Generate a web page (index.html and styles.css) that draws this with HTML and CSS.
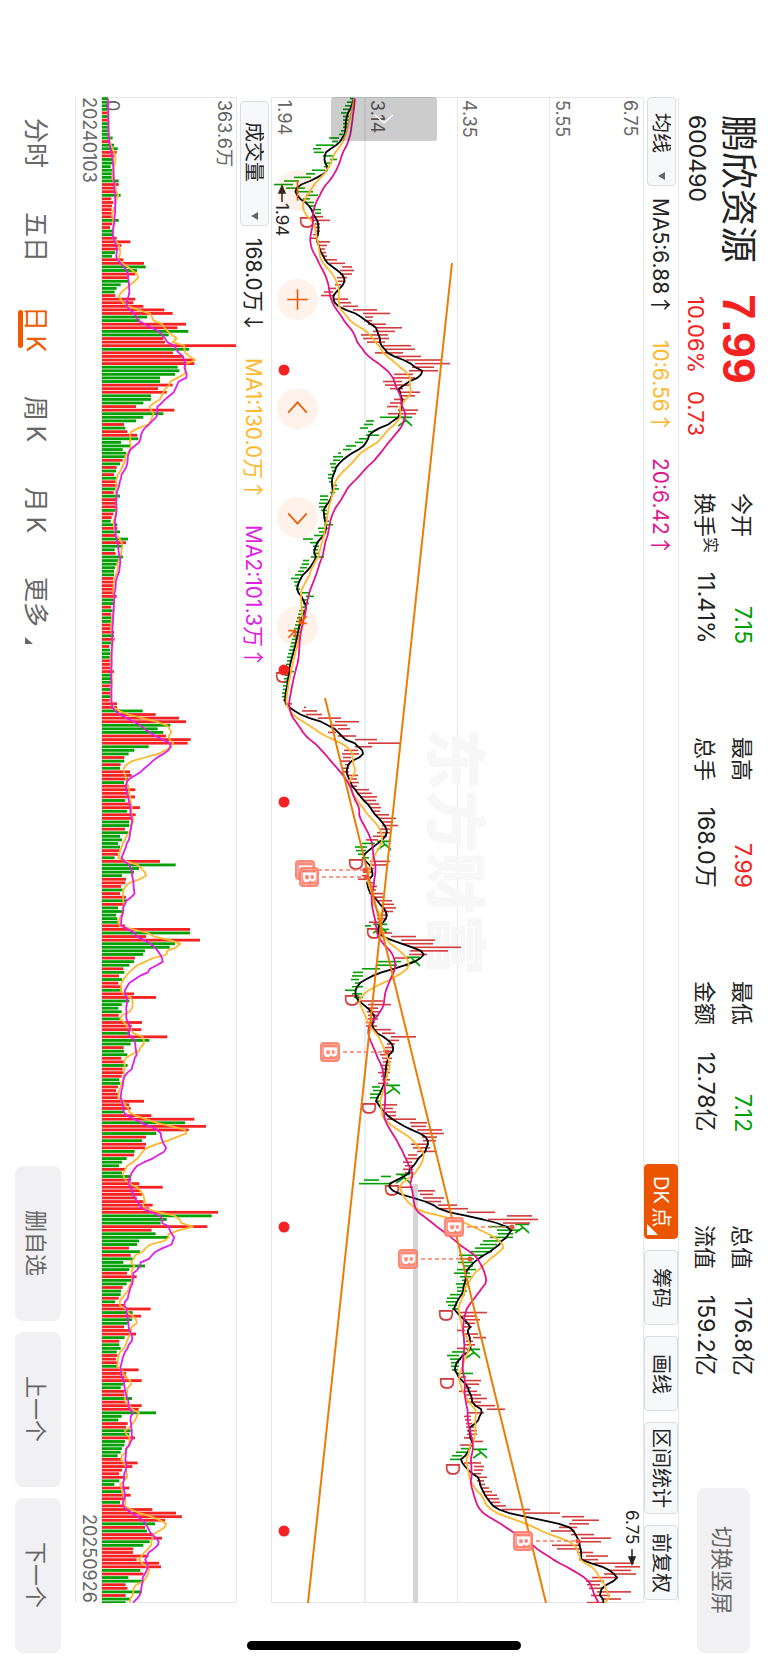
FILE: index.html
```html
<!DOCTYPE html>
<html lang="zh-CN">
<head>
    <meta charset="UTF-8">
    <meta name="viewport" content="width=device-width, initial-scale=1.0">
    <title>鹏欣资源 600490</title>
    <link rel="stylesheet" href="styles.css">
</head>
<body>
    <header class="header">
        <div class="brand">
            <h1>鹏欣资源</h1>
            <span class="price">7.99</span>
            <span class="code">600490</span>
            <span class="change"><span>10.06%</span><span>0.73</span></span>
        </div>
        <dl class="stats">
            <div><dt>今开</dt><dd class="down">7.15</dd></div>
            <div><dt>最高</dt><dd class="up">7.99</dd></div>
            <div><dt>最低</dt><dd class="down">7.12</dd></div>
            <div><dt>总值</dt><dd>176.8亿</dd></div>
            <div><dt>换手<small>实</small></dt><dd>11.41%</dd></div>
            <div><dt>总手</dt><dd>168.0万</dd></div>
            <div><dt>金额</dt><dd>12.78亿</dd></div>
            <div><dt>流值</dt><dd>159.2亿</dd></div>
        </dl>
        <button class="gray-btn rotate-btn">切换竖屏</button>
    </header>

    <main class="main">
        <div class="toolbar toolbar-main">
            <select class="picker" aria-label="主图指标"><option>均线</option></select>
            <span class="ma">MA5:6.88<i>↑</i></span>
            <span class="ma ma-yellow">10:6.56<i>↑</i></span>
            <span class="ma ma-pink">20:6.42<i>↑</i></span>
            <div class="tools">
                <button class="tool active">DK&thinsp;点</button>
                <button class="tool">筹码</button>
                <button class="tool">画线</button>
                <button class="tool wide">区间统计</button>
                <button class="tool">前复权</button>
            </div>
        </div>

        <div class="price-chart">
            <svg viewBox="271 97 373 1506" role="img" aria-label="日K线">
                <g class="grid">
                    <path d="M271.5 97.5H643.5V1602.5H271.5ZM457.5 97V1602M549.5 97V1602"/>
                    <path class="thick" d="M365 97V1602"/>
                </g>
                <text class="watermark" transform="translate(432 728) rotate(90)">东方财富</text>
                <g class="axis">
                    <text transform="translate(624 100) rotate(90)">6.75</text>
                    <text transform="translate(556 100) rotate(90)">5.55</text>
                    <text transform="translate(463 100) rotate(90)">4.35</text>
                    <text transform="translate(371 100) rotate(90)">3.14</text>
                    <text transform="translate(278 100) rotate(90)">1.94</text>
                </g>
                <path class="support" d="M415.5 1184V1603"/>
                <g id="marks"></g>
                <g id="candles"></g>
                <g id="priceLines"></g>
                <path class="trend" d="M452 263L308 1603M325 698L546 1603"/>
                <g id="badges"></g>
                <g class="peak">
                    <text transform="translate(276 203) rotate(90)">1.94</text>
                    <path d="M282 202V189"/>
                    <path class="tip" d="M279 193L282 186L285 193Z"/>
                    <text transform="translate(626 1510) rotate(90)">6.75</text>
                    <path d="M632 1549V1560"/>
                    <path class="tip" d="M629 1557L632 1564L635 1557Z"/>
                </g>
                <g class="dots">
                    <circle cx="284" cy="370" r="5.5"/>
                    <circle cx="284" cy="670" r="5.5"/>
                    <circle cx="284" cy="802" r="5.5"/>
                    <circle cx="284" cy="1227" r="5.5"/>
                    <circle cx="284" cy="1531" r="5.5"/>
                </g>
            </svg>
            <button class="drawer" aria-label="展开"><svg viewBox="0 0 20 10"><path d="M1 1L10 9L19 1"/></svg></button>
            <div class="controls">
                <button aria-label="缩小"><svg viewBox="0 0 40 40"><path d="M20 10V30"/></svg></button>
                <button aria-label="放大"><svg viewBox="0 0 40 40"><path d="M20 10V30M10 20H30"/></svg></button>
                <button aria-label="左移"><svg viewBox="0 0 40 40"><path d="M11 24L20 14L29 24"/></svg></button>
                <button aria-label="右移"><svg viewBox="0 0 40 40"><path d="M11 16L20 26L29 16"/></svg></button>
                <button aria-label="收起"><svg viewBox="0 0 40 40"><path d="M11 24H18V31M18 24L11 31M29 17H22V10M22 17L29 10"/></svg></button>
            </div>
        </div>

        <div class="toolbar toolbar-vol">
            <select class="picker picker-vol" aria-label="副图指标"><option>成交量</option></select>
            <span class="ma">168.0万<i>↓</i></span>
            <span class="ma ma-yellow">MA1:130.0万<i>↑</i></span>
            <span class="ma ma-purple">MA2:101.3万<i>↑</i></span>
        </div>

        <div class="volume-chart">
            <svg viewBox="101 97 136 1506" role="img" aria-label="成交量">
                <path class="grid" d="M101.5 97.5H236.5V1602.5H101.5Z"/>
                <g id="volumes"></g>
                <g class="axis">
                    <text transform="translate(106 100) rotate(90)">0</text>
                    <text transform="translate(218 100) rotate(90)">363.6万</text>
                </g>
                <g id="volumeLines"></g>
            </svg>
        </div>

        <div class="dates"><span>20240103</span><span>20250926</span></div>
    </main>

    <footer class="footer">
        <nav class="tabs">
            <a href="#">分时</a>
            <a href="#">五日</a>
            <a href="#" class="active">日&thinsp;K</a>
            <a href="#">周&thinsp;K</a>
            <a href="#">月&thinsp;K</a>
            <a href="#">更多<svg class="corner" viewBox="0 0 8 7"><path d="M0 0V7H8Z"/></svg></a>
        </nav>
        <div class="actions">
            <button class="gray-btn">删自选</button>
            <button class="gray-btn">上一个</button>
            <button class="gray-btn">下一个</button>
        </div>
    </footer>
    <div class="home-bar"></div>

    <script src="chart.js"></script>
</body>
</html>
```
FILE: styles.css
```css
* {
    margin: 0;
    padding: 0;
    box-sizing: border-box;
}

/* the whole screen reads sideways: lines run top to bottom */
html {
    writing-mode: vertical-rl;
    text-orientation: sideways;
}

body {
    position: relative;
    width: 100vw;
    height: 100vh;
    display: flex;
    flex-direction: column;
    overflow: hidden;
    background-color: #fff;
    color: #222;
    font-family: Inter, 'Noto Sans CJK SC', sans-serif;
    font-size: 22px;
    line-height: 1;
}

button,
select {
    font: inherit;
    color: inherit;
    border: none;
    background: none;
    writing-mode: inherit;
    text-orientation: inherit;
}

a {
    color: inherit;
    text-decoration: none;
}

/* Header */
.header {
    flex: none;
    display: flex;
    align-items: center;
    block-size: 89px;
    padding-inline: 115px 12px;
}

.brand {
    display: grid;
    grid-template-columns: 179px 199px;
    grid-template-rows: 44px 32px;
    align-items: center;
    margin-block-start: 2px;
}

.brand h1 {
    font-size: 37px;
    font-weight: 400;
}

.price {
    font-family: 'Liberation Sans', sans-serif;
    font-size: 46px;
    font-weight: 700;
    color: #f52222;
}

.code {
    align-self: end;
    font-size: 23px;
}

.change {
    align-self: end;
    display: flex;
    gap: 18px;
    padding-inline-start: 2px;
    color: #f52222;
}

.stats {
    flex: 1;
    display: grid;
    grid-template-columns: repeat(4, 151px);
    grid-template-rows: 37px 37px;
    column-gap: 93px;
    align-items: center;
}

.stats div {
    display: flex;
    justify-content: space-between;
    align-items: center;
}

.stats dd {
    font-size: 23px;
}

.stats small {
    font-size: 16px;
    vertical-align: super;
    line-height: 0;
}

.up {
    color: #f52222;
}

.down {
    color: #00a000;
}

.gray-btn {
    block-size: 46px;
    inline-size: 155px;
    padding-block-start: 3px;
    border-radius: 8px;
    background-color: #f1f1f3;
    color: #666;
    text-align: center;
}

.header .rotate-btn {
    block-size: 53px;
    inline-size: 165px;
}

/* Charts */
.main {
    flex: 1;
    display: flex;
    flex-direction: column;
    margin-inline: 97px 62px;
    border-block: 1px solid #e3e6ea;
}

.toolbar {
    flex: none;
    display: flex;
    align-items: center;
    block-size: 34px;
}

.picker {
    appearance: none;
    block-size: 29px;
    inline-size: 89px;
    padding-block-start: 4px;
    padding-inline-start: 15px;
    border: 1px solid #d9dde2;
    border-radius: 4px;
    font-size: 20px;
    background: #f7f8fa url("data:image/svg+xml,%3Csvg xmlns='http://www.w3.org/2000/svg' width='8' height='8'%3E%3Cpath d='M0 4L7 0V8Z' fill='%23666'/%3E%3C/svg%3E") no-repeat 10px calc(100% - 5px);
}

.picker-vol {
    inline-size: 125px;
    padding-inline-start: 20px;
    margin-inline-start: 4px;
}

.ma {
    margin-inline-start: 12px;
    margin-inline-end: 13px;
    font-size: 21px;
    white-space: nowrap;
}

.ma i {
    font-family: 'Noto Sans CJK SC', sans-serif;
    font-style: normal;
}

.ma-yellow {
    color: #ffb82e;
}

.ma-pink {
    color: #e0148c;
}

.ma-purple {
    color: #e01ee6;
}

.tools {
    display: flex;
    gap: 11px;
    margin-inline-start: auto;
    margin-inline-end: 3px;
}

.tool {
    position: relative;
    block-size: 34px;
    inline-size: 75px;
    border: 1px solid #d9dde2;
    border-radius: 4px;
    background-color: #f7f8fa;
    font-size: 20px;
    text-align: center;
}

.tool.wide {
    inline-size: 92px;
}

.tool.active {
    border-color: #eb5500;
    background-color: #eb5500;
    color: #fff;
}

.tool.active::after {
    content: '';
    position: absolute;
    left: 2px;
    bottom: 3px;
    border-top: 11px solid transparent;
    border-left: 11px solid #fff;
}

.price-chart {
    position: relative;
    flex: 373;
    min-block-size: 0;
}

.volume-chart {
    flex: 136;
    min-block-size: 0;
}

.price-chart > svg,
.volume-chart > svg {
    display: block;
    width: 100%;
    height: 100%;
}

.grid {
    fill: none;
    stroke: #e3e6ea;
}

.grid .thick {
    stroke: #ebeff5;
    stroke-width: 2;
}

.watermark {
    font-family: 'Noto Sans CJK SC', sans-serif;
    font-size: 62px;
    font-weight: 900;
    fill: #f7f7f7;
}

.axis {
    font-size: 18px;
    fill: #666;
}

svg text {
    writing-mode: horizontal-tb;
}

.support {
    stroke: #d2d6db;
    stroke-width: 5;
}

.trend {
    fill: none;
    stroke: #eb7d05;
    stroke-width: 2;
}

.peak {
    font-size: 17px;
    fill: #222;
    stroke-width: 1.5;
}

.peak path {
    stroke: #222;
}

.dots {
    fill: #f52222;
}

.ma-line {
    fill: none;
    stroke-width: 1.8;
    stroke-linejoin: round;
}

.mark {
    font-size: 19px;
    text-anchor: middle;
}

.badge text {
    font-size: 17px;
    font-weight: 700;
    text-anchor: middle;
    fill: #fff;
}

.drawer {
    position: absolute;
    left: 16%;
    top: 0;
    width: 106px;
    height: 44px;
    border-radius: 3px;
    background-color: rgba(0, 0, 0, 0.2);
}

.drawer svg {
    display: block;
    width: 20px;
    height: 10px;
    margin: auto;
    fill: none;
    stroke: #fff;
    stroke-width: 1.2;
}

.controls {
    position: absolute;
    left: 6px;
    top: 73px;
    display: flex;
    gap: 68px;
}

.controls button {
    width: 41px;
    height: 41px;
    border-radius: 50%;
    background-color: rgba(240, 90, 0, 0.08);
}

.controls svg {
    display: block;
    width: 41px;
    height: 41px;
    fill: none;
    stroke: #f05a00;
    stroke-width: 1.6;
}

.dates {
    flex: none;
    display: flex;
    justify-content: space-between;
    align-items: center;
    block-size: 25px;
    font-size: 18px;
    color: #666;
}

/* Footer */
.footer {
    flex: none;
    display: flex;
    justify-content: space-between;
    align-items: center;
    block-size: 75px;
    padding-inline: 118px 12px;
}

.tabs {
    display: flex;
    gap: 44px;
    padding-block-start: 4px;
    font-size: 25px;
    color: #666;
}

.tabs a {
    position: relative;
}

.tabs .active {
    color: #f05a00;
}

.tabs .active::after {
    content: '';
    position: absolute;
    left: -5px;
    top: 4px;
    bottom: 4px;
    width: 5px;
    border-radius: 3px;
    background-color: #f05a00;
}

.corner {
    position: absolute;
    left: 2px;
    top: 100%;
    width: 8px;
    height: 7px;
    margin-top: 10px;
    fill: #666;
}

.actions {
    display: flex;
    gap: 11px;
}

.home-bar {
    position: absolute;
    left: 50%;
    bottom: 15px;
    width: 274px;
    height: 9px;
    margin-left: -137px;
    border-radius: 5px;
    background-color: #000;
}
```
FILE: chart.js
```js
const NS = 'http://www.w3.org/2000/svg';
const START = 98.6;
const STEP = 3.581;
const RED = '#f52222';
const GREEN = '#00a000';

// low-high of each day, in runs of one colour
const candleRuns = [
    ['g', '350-354 347-353 345-351 343-349 341-348 343-349 343-349 343-349 343-348 341-346 339-346 329-339 332-338 316-334 313-321 314-324 323-333 330-337 325-332 324-330 312-325 306-315 294-311 284-299 274-293 286-305 295-313 306-318 303-310 306-314 309-316 313-321 315-321'],
    ['r', '311-323 313-330 315-320 315-320 316-320 313-318 311-318 316-330 318-327 320-325 321-326 323-327 325-337 330-345 342-352 340-354 340-352 337-347 338-344 335-341 328-336 324-333 321-335 334-348 338-351 343-358 353-377 363-390 365-373 364-372 368-386 376-402 373-395 361-388 363-389 367-385 383-411 385-415 375-403 396-421 406-441 415-450 412-434 409-438 394-413 393-415 383-402 385-411 390-403 398-420 400-415 394-405 390-403 387-398 398-418 388-416'],
    ['g', '380-405 366-374 364-373 360-368 368-374 366-379 359-369 355-363 346-356 343-351 338-341 333-343 333-340 330-336 331-336 332-336 328-333 328-333 329-333 332-337 333-339 330-335 320-328 320-328 319-327 319-327 321-327 324-328 324-327 325-329 324-333 318-328 319-326 314-323 303-313 310-319 313-319 313-318 315-319 311-324 303-309 302-309 300-307 298-304 295-303 291-299 294-299 295-299 296-300 302-310 306-314 302-307 303-309 302-306 299-304 298-303 297-302 296-301 295-301 294-300 294-300 293-299 292-298 291-297 290-296 289-295 288-294 287-293 287-292 286-291 286-290 286-294 285-290 284-289 284-289 283-288 283-288 282-287 282-287'],
    ['r', '283-287 287-292 304-306 302-317 306-322 318-341 335-359 330-347 338-350 328-336 338-356 355-377 368-400 355-372 344-358 342-359 343-351 341-350 345-350 343-349 344-349 347-358 349-357 351-359 350-357 356-369 358-372 360-377 363-376 367-379 371-381 372-380 375-389 379-396 382-393 382-398 380-390 377-391 373-387 366-378'],
    ['g', '362-375 355-367 356-366 358-365 362-369'],
    ['r', '370-390 372-387 365-374 363-372 362-369 358-368 367-373 370-377 369-376 369-383 375-383 378-392 382-394 383-396 382-393 379-388 377-385 369-380'],
    ['g', '365-371 377-389'],
    ['r', '380-392 391-416 401-435 402-433 412-461 410-448 409-427 395-409'],
    ['g', '378-401 377-397 362-380 353-363 352-363 351-359 355-361 352-363 345-355 352-362 354-363'],
    ['r', '360-383 368-391 367-378 367-380 368-379 368-378 366-375 366-377 375-391 382-395 391-416 388-399 387-395 385-393 383-392 380-390 382-392 383-391 381-389 382-388 378-390 381-388 382-390 378-388'],
    ['g', '372-380 373-381 370-381 370-379 375-380'],
    ['r', '382-397 385-393 386-396 387-396 387-416 410-427 411-426 417-442 420-444 422-437 423-436 411-427 413-430 417-437 408-417 406-418 403-412 405-413 403-413 405-412'],
    ['g', '381-391 364-379 359-392'],
    ['r', '399-413 418-435 420-433 423-444 425-441 438-457 440-468 467-495 507-532 488-538 503-530'],
    ['g', '488-512 497-520 498-513 490-513 483-502 480-497 475-495 471-492 459-483 460-474 458-473 463-473 457-476 454-470 460-473 462-468 456-467 457-466 457-467 450-465 447-458 446-458 448-457 452-458'],
    ['r', '460-487 462-475 463-480 465-475 463-472 457-465 465-478 473-486 466-473 465-475 457-467'],
    ['g', '452-465 447-459 450-461 451-459 451-459 452-458 456-473'],
    ['r', '461-466 464-481 466-479 464-471 459-477 466-481 469-487 467-481 474-495 487-505 467-484 464-471 465-471 466-472 466-474 467-477 467-477 464-473 471-483 460-471'],
    ['g', '461-470 456-467 452-462 450-461'],
    ['r', '464-481 474-484 474-483 474-481 477-487 477-484 479-485 481-489 482-492 484-497 487-499 491-500 494-506 502-530 524-560 562-584 572-599 569-589 559-577 551-574 571-594 581-611 577-601 552-581 557-581 577-593 586-608 579-598 594-634 615-640 609-631 604-636 592-617 586-604 587-600 589-604 597-631 591-610 601-621 587-604']
];

const volumeData = `
g18 g19 g20 g20 r20 g19 r20 g20 g20 g20 g20 g32 r24 g36 g47 r44 r40 g34 g32 g26 g32 g34 g30 g50 r50 r42 r44 g56 r28 r34
r30 r29 r32 r30 g50 r30 r24 g36 g30 r44 r85 r58 r49 g39 g30 r64 r126 g131 g105 r100 r80 g78 g56 g44 g38 r40 r100 r94 r124 r187
r212 g135 g114 r252 r226 g259 g200 r184 r189 r402 g261 r213 r244 r277 r277 g227 g232 g219 g174 g174 r212 r168 r194 g147 g147 g124 r102 r217 g184 g124
g102 r66 g70 r76 r106 g109 g57 g84 g62 g72 g72 r62 g54 r44 g42 r36 g44 r44 r46 g40 r35 g54 r42 r44 r44 g40 r34 r29 g26 g46
r46 g54 r44 g78 r72 g60 g38 r41 g63 g49 g44 g39 g36 g36 r34 r34 r34 r34 r34 r44 g37 g37 r27 g32 r27 g29 g29 r26 r26 r36
g36 r38 g27 r22 g24 g26 g27 r28 r27 r27 r36 g29 g29 g29 r24 g26 r30 g29 r23 r45 r45 g122 r161 r231 r252 g205 g167 g184 r192 r266
r257 g140 g97 g80 r67 g67 r56 g54 r84 r89 r79 g66 r76 r100 r84 r99 g70 r84 r114 g75 r101 r92 g82 g82 r69 g78 g54 g60 g48 g54
r54 r48 g38 r174 g221 g111 g96 g60 r72 r70 r57 g62 r54 r72 g74 r66 g48 g60 g42 g46 g49 r69 r264 g264 r132 r294 g219 g203 g129 g123
r99 g96 g82 r64 g67 r51 g60 r49 r59 g60 r96 r162 g82 g59 g49 g59 r50 g56 r120 r89 r118 g84 r196 g142 g86 r65 g66 g76 r58 r65
g77 r62 r64 r59 g52 g55 r48 r42 r48 r50 r126 r82 r86 g64 r148 r277 g249 r312 r260 g163 r132 g120 r132 r129 g98 r96 g74 g60 g51 r70
g60 g84 r87 r112 r182 r114 r120 r104 r124 r152 r142 r348 g329 g194 g176 r316 r149 g161 g198 g111 g105 r81 g114 r86 g92 g64 g129 g82 r75 r104
g88 g74 r62 g57 g56 r50 g39 r68 r146 g92 r117 g90 g77 r66 r84 r102 g68 r52 g52 g56 g44 r46 r42 r46 g48 r110 r72 r74 r119 g64
g56 r67 r67 g90 r72 r119 r110 g162 g59 g49 r77 r72 g86 g82 r99 g69 g67 g60 g56 g47 r58 r107 r91 r60 r51 r70 g52 g37 r82 g62
r86 r72 g54 r70 r151 r222 r240 r189 g159 r129 g135 r154 r180 g143 g124 r94 r93 r139 r104 r171 r177 g115 r124 g79 g124 r71 r76 g119 r71 g84 g71`;

const marks = [
    ['D', 307, 222], ['K', 405, 421], ['D', 283, 677], ['K', 384, 845], ['D', 356, 864],
    ['K', 380, 928], ['D', 374, 933], ['K', 413, 961], ['D', 352, 1000], ['K', 393, 1089],
    ['D', 369, 1108], ['K', 403, 1178], ['D', 392, 1190], ['K', 522, 1228], ['D', 446, 1315],
    ['K', 473, 1353], ['D', 447, 1383], ['K', 480, 1453], ['D', 453, 1469]
];

// badge x, y and the x of the day it points at
const buys = [
    [305, 870, 365], [309, 877, 366], [330, 1052, 387],
    [454, 1227, 512], [408, 1259, 470], [523, 1541, 578]
];

function add(parent, tag, attrs, text) {
    const el = document.createElementNS(NS, tag);
    for (const key in attrs) el.setAttribute(key, attrs[key]);
    if (text) el.textContent = text;
    parent.appendChild(el);
    return el;
}

function rowY(i) {
    return START + STEP * i;
}

function average(values, size, before) {
    return values.map((_, i) => {
        let sum = 0;
        for (let k = i - size + 1; k <= i; k++) sum += k < 0 ? before : values[k];
        return sum / size;
    });
}

function drawLine(parent, values, color) {
    const points = values.map((x, i) => x.toFixed(1) + ',' + rowY(i).toFixed(1)).join(' ');
    add(parent, 'polyline', { class: 'ma-line', points: points, stroke: color });
}

// candles
const candles = document.getElementById('candles');
const closes = [];
candleRuns.forEach(([color, run]) => {
    run.split(' ').forEach(item => {
        const [low, high] = item.split('-').map(Number);
        add(candles, 'rect', {
            x: low,
            y: rowY(closes.length) - 0.8,
            width: high - low,
            height: 1.6,
            fill: color === 'r' ? '#d23c3c' : GREEN
        });
        closes.push((low + high) / 2);
    });
});

const priceLines = document.getElementById('priceLines');
drawLine(priceLines, average(closes, 5, 354), '#000');
drawLine(priceLines, average(closes, 10, 354), '#ffb82e');
drawLine(priceLines, average(closes, 20, 355), '#e0148c');

// K and D letters
const markLayer = document.getElementById('marks');
marks.forEach(([letter, x, y]) => {
    add(markLayer, 'text', {
        class: 'mark',
        fill: letter === 'K' ? GREEN : '#d23c3c',
        transform: `translate(${x - 7} ${y}) rotate(90)`
    }, letter);
});

// buy badges
const badgeLayer = document.getElementById('badges');
buys.forEach(([x, y, target]) => {
    const g = add(badgeLayer, 'g', { class: 'badge' });
    add(g, 'path', { d: `M${x + 13} ${y}H${target}`, stroke: '#ff7a66', 'stroke-width': 1.5, 'stroke-dasharray': '4 3' });
    add(g, 'circle', { cx: target, cy: y, r: 2.5, fill: '#f0503c' });
    add(g, 'rect', { x: x - 10, y: y - 10, width: 20, height: 20, rx: 4, fill: '#ff7a66', 'fill-opacity': 0.9 });
    add(g, 'rect', { x: x - 7.5, y: y - 7.5, width: 15, height: 15, rx: 2, fill: 'none', stroke: '#ffb4a8', 'stroke-width': 0.8 });
    add(g, 'text', { transform: `translate(${x - 6} ${y}) rotate(90)` }, 'B');
});

// volumes
const volumes = document.getElementById('volumes');
const amounts = volumeData.trim().split(/\s+/).map((item, i) => {
    const size = Number(item.slice(1)) / 3;
    add(volumes, 'rect', {
        x: 102,
        y: rowY(i) - 1.4,
        width: size,
        height: 2.8,
        fill: item[0] === 'r' ? RED : GREEN
    });
    return size;
});

const volumeLines = document.getElementById('volumeLines');
drawLine(volumeLines, average(amounts, 5, 6).map(v => v + 102), '#ffb82e');
drawLine(volumeLines, average(amounts, 10, 6).map(v => v + 102), '#e01ee6');
```
